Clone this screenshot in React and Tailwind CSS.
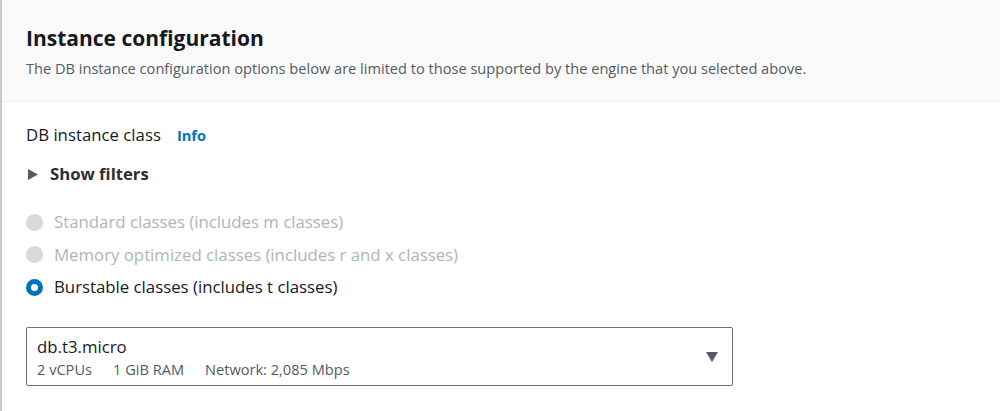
import React, { useState } from "react";

const options = [
  { id: "standard", label: "Standard classes (includes m classes)", disabled: true },
  { id: "memory", label: "Memory optimized classes (includes r and x classes)", disabled: true },
  { id: "burstable", label: "Burstable classes (includes t classes)", disabled: false },
];

const App = () => {
  const [selected] = useState("burstable");

  return (
    <div
      className="min-h-screen bg-white border-l-2 border-[#c6cbcd] text-[#16191f]"
      style={{ fontFamily: '"Open Sans", "Noto Sans", sans-serif' }}
    >
      {/* Header */}
      <div className="bg-[#fafafa] border-b border-[#eaeded] pl-6 pt-[24px] pb-[22px]">
        <h2 className="text-[21px] leading-[28px] font-bold text-[#16191f]">
          Instance configuration
        </h2>
        <p className="text-[14.6px] leading-[22px] text-[#545b64] mt-[5px]">
          The DB instance configuration options below are limited to those supported by the engine that you selected above.
        </p>
      </div>

      {/* Body */}
      <div className="pl-6 pt-[21px]">
        <div className="flex items-center">
          <span className="text-[16.8px] leading-[24px]">DB instance class</span>
          <span className="ml-4 text-[14.6px] leading-[24px] font-bold text-[#0073bb]">Info</span>
        </div>

        <div className="flex items-center mt-[15px]">
          <svg width="10" height="11" viewBox="0 0 10 11" className="ml-[2px]">
            <path d="M0 0 L10 5.5 L0 11 Z" fill="#545b64" />
          </svg>
          <span className="ml-[12px] text-[16.7px] leading-[24px] font-bold text-[#2a2e35]">Show filters</span>
        </div>

        <div className="mt-[24px] flex flex-col gap-[8.5px]">
          {options.map((o) => (
            <label key={o.id} className="flex items-center h-6">
              {o.disabled ? (
                <span className="w-[17px] h-[17px] rounded-full bg-[#d5dbdb]" />
              ) : (
                <span
                  className={
                    "w-[17px] h-[17px] rounded-full border-[5px] bg-white " +
                    (selected === o.id ? "border-[#0073bb]" : "border-[#687078]")
                  }
                />
              )}
              <span
                className={
                  "ml-[11px] text-[16.8px] leading-[24px] " +
                  (o.disabled ? "text-[#aab7b8]" : "text-[#16191f]")
                }
              >
                {o.label}
              </span>
            </label>
          ))}
        </div>

        <div className="mt-[28px] w-[707px] h-[59px] border border-[#687078] rounded-[2px] flex items-start justify-between pl-[10px] pr-[14px] pt-[8px]">
          <div className="flex flex-col">
            <span className="text-[16.8px] leading-[22px]">db.t3.micro</span>
            <div className="flex text-[14.6px] leading-[22px] text-[#545b64] gap-[21px]">
              <span>2 vCPUs</span>
              <span>1 GiB RAM</span>
              <span>Network: 2,085 Mbps</span>
            </div>
          </div>
          <svg width="12" height="10" viewBox="0 0 12 10" className="mt-[16px]">
            <path d="M0 0 L12 0 L6 10 Z" fill="#545b64" />
          </svg>
        </div>
      </div>
    </div>
  );
};

export default App;
